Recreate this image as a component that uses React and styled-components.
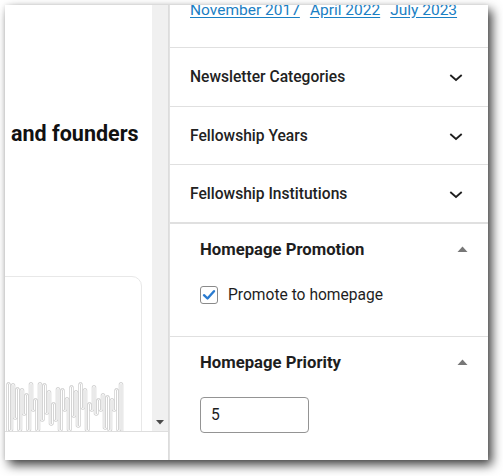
import React from "react";
import styled, { createGlobalStyle } from "styled-components";

const Global = createGlobalStyle`
  html, body { margin: 0; padding: 0; background: #fff; }
  body { font-family: Roboto, "Noto Sans", "Liberation Sans", sans-serif; min-height: 476px; }
  #root { min-height: 476px; }
  * { box-sizing: border-box; }
`;

const Window = styled.div`
  margin: 5px 0 0 5px;
  width: 483px;
  height: 455px;
  display: flex;
  background: #fff;
  overflow: hidden;
  box-shadow: 4px 5px 10px rgba(0, 0, 0, 0.75), 0 0 4px rgba(0, 0, 0, 0.08);
`;

const LeftCol = styled.div`
  width: 164px;
  flex: none;
  display: flex;
  flex-direction: column;
  border-right: 1px solid #dcdcdc;
`;

const ScrollArea = styled.div`
  height: 427px;
  flex: none;
  display: flex;
  border-bottom: 1px solid #dedede;
`;

const Content = styled.div`
  flex: 1;
  min-width: 0;
  overflow: hidden;
`;

const Heading = styled.h1`
  margin: 117px 0 0;
  padding-left: 6px;
  font-size: 21.5px;
  line-height: 24px;
  font-weight: 700;
  color: #111;
  white-space: nowrap;
`;

const Card = styled.div`
  margin: 130px 0 0 -20px;
  width: 157px;
  height: 300px;
  border: 1px solid #e8e8e8;
  border-radius: 10px;
  background: #fff;
  padding: 104px 0 0 20px;
`;

const Scrollbar = styled.div`
  width: 16px;
  flex: none;
  background: #f0f0f0;
  display: flex;
  flex-direction: column;
  justify-content: flex-end;
  align-items: center;
`;

const ArrowBtn = styled.div`
  width: 16px;
  height: 17px;
  display: flex;
  align-items: center;
  justify-content: center;
`;

const Footer = styled.div`
  flex: 1;
`;

const Sidebar = styled.div`
  width: 319px;
  flex: none;
  border-left: 1px solid #e2e2e2;
  overflow: hidden;
`;

const LinksSection = styled.div`
  margin-top: -21px;
  padding: 16px 20px 27px;
  border-bottom: 1px solid #e0e0e0;
  display: flex;
  gap: 10px;
`;

const Link = styled.a`
  color: #1a80c4;
  font-size: 15.5px;
  line-height: 20px;
  text-decoration: underline;
  text-underline-offset: 2px;
  white-space: nowrap;
`;

const PanelRow = styled.div`
  height: ${(p) => p.$h || 58}px;
  padding: 0 20px;
  display: flex;
  align-items: center;
  justify-content: space-between;
  border-bottom: 1px solid #e0e0e0;
  font-size: 15.6px;
  font-weight: 500;
  color: #222;
`;

const PanelBody = styled.div`
  padding: ${(p) => p.$pt}px 20px ${(p) => p.$pb}px 30px;
  border-top: ${(p) => (p.$top ? "1px solid #e0e0e0" : "none")};
  border-bottom: 1px solid #e0e0e0;
`;

const PanelTitle = styled.div`
  height: 20px;
  display: flex;
  align-items: center;
  justify-content: space-between;
  font-size: 16.7px;
  font-weight: 700;
  color: #1e1e1e;
  margin-bottom: ${(p) => p.$mb}px;
`;

const CheckRow = styled.label`
  height: 20px;
  display: flex;
  align-items: center;
  gap: 10px;
  font-size: 15.6px;
  color: #1e1e1e;
`;

const CheckBox = styled.span`
  width: 18px;
  height: 18px;
  border: 1px solid #8a8a8a;
  border-radius: 3px;
  background: #fff;
  display: flex;
  align-items: center;
  justify-content: center;
`;

const NumberInput = styled.div`
  width: 109px;
  height: 36px;
  border: 1px solid #949494;
  border-radius: 4px;
  padding: 0 10px;
  display: flex;
  align-items: center;
  font-size: 15.6px;
  color: #1e1e1e;
`;

const Chevron = () => (
  <svg width="24" height="24" viewBox="0 0 24 24" fill="none">
    <path d="M6.3 10 L12 15 L17.7 10" stroke="#1e1e1e" strokeWidth="1.8" />
  </svg>
);

const TriUp = () => (
  <svg width="12" height="8" viewBox="0 0 12 8">
    <polygon points="1.5,7 6.5,1.5 11.5,7" fill="#777" />
  </svg>
);

const TriDown = () => (
  <svg width="8" height="5" viewBox="0 0 8 5">
    <polygon points="0,0 8,0 4,4.5" fill="#4a4a4a" />
  </svg>
);

const tops = [2, 3, 7, 8, 13, 2, 18, 2, 3, 10, 22, 7, 8, 17, 5, 10, 2, 8, 22, 5, 18, 13, 15, 18, 8, 2];
const bottoms = [50, 38, 50, 34, 50, 30, 50, 40, 33, 44, 40, 50, 30, 50, 36, 46, 28, 50, 30, 34, 30, 48, 50, 30, 50];

function wavePath() {
  const step = 4.5;
  const x0 = 2.5;
  let d = `M ${x0 - 1} 52`;
  tops.forEach((t, i) => {
    const xc = x0 + i * step;
    d += ` L ${xc - 1} ${t + 1.2} Q ${xc} ${t - 0.4} ${xc + 1} ${t + 1.2}`;
    if (i < bottoms.length) {
      const b = bottoms[i];
      const nx = x0 + (i + 1) * step - 1;
      const mid = (xc + 1 + nx) / 2;
      d += ` L ${xc + 1} ${b - 1.2} Q ${mid} ${b + 0.6} ${nx} ${b - 1.2}`;
    } else {
      d += ` L ${xc + 1} 52`;
    }
  });
  return d;
}

const WaveSvg = styled.svg`
  display: block;
`;

const Waveform = () => {
  const d = wavePath();
  return (
    <WaveSvg width="122" height="52" viewBox="0 0 122 52">
      <path d={d} fill="none" stroke="#d4d4d4" strokeWidth="2.6" strokeLinejoin="round" />
      <path d={d} fill="none" stroke="#fff" strokeWidth="1" strokeLinejoin="round" />
    </WaveSvg>
  );
};

export default function App() {
  return (
    <>
      <Global />
      <Window>
        <LeftCol>
          <ScrollArea>
            <Content>
              <Heading>and founders</Heading>
              <Card>
                <Waveform />
              </Card>
            </Content>
            <Scrollbar>
              <ArrowBtn>
                <TriDown />
              </ArrowBtn>
            </Scrollbar>
          </ScrollArea>
          <Footer />
        </LeftCol>
        <Sidebar>
          <LinksSection>
            <Link href="#">November 2017</Link>
            <Link href="#">April 2022</Link>
            <Link href="#">July 2023</Link>
          </LinksSection>
          <PanelRow $h={59}>
            Newsletter Categories
            <Chevron />
          </PanelRow>
          <PanelRow>
            Fellowship Years
            <Chevron />
          </PanelRow>
          <PanelRow>
            Fellowship Institutions
            <Chevron />
          </PanelRow>
          <PanelBody $top $pt={15} $pb={31}>
            <PanelTitle $mb={26}>
              Homepage Promotion
              <TriUp />
            </PanelTitle>
            <CheckRow>
              <CheckBox>
                <svg width="16" height="16" viewBox="0 0 16 16">
                  <path d="M3 8.2 L6.5 11.5 L13 4.2" fill="none" stroke="#2a7bd0" strokeWidth="2.4" strokeLinecap="round" strokeLinejoin="round" />
                </svg>
              </CheckBox>
              Promote to homepage
            </CheckRow>
          </PanelBody>
          <PanelBody $pt={15} $pb={30}>
            <PanelTitle $mb={25}>
              Homepage Priority
              <TriUp />
            </PanelTitle>
            <NumberInput>5</NumberInput>
          </PanelBody>
        </Sidebar>
      </Window>
    </>
  );
}
